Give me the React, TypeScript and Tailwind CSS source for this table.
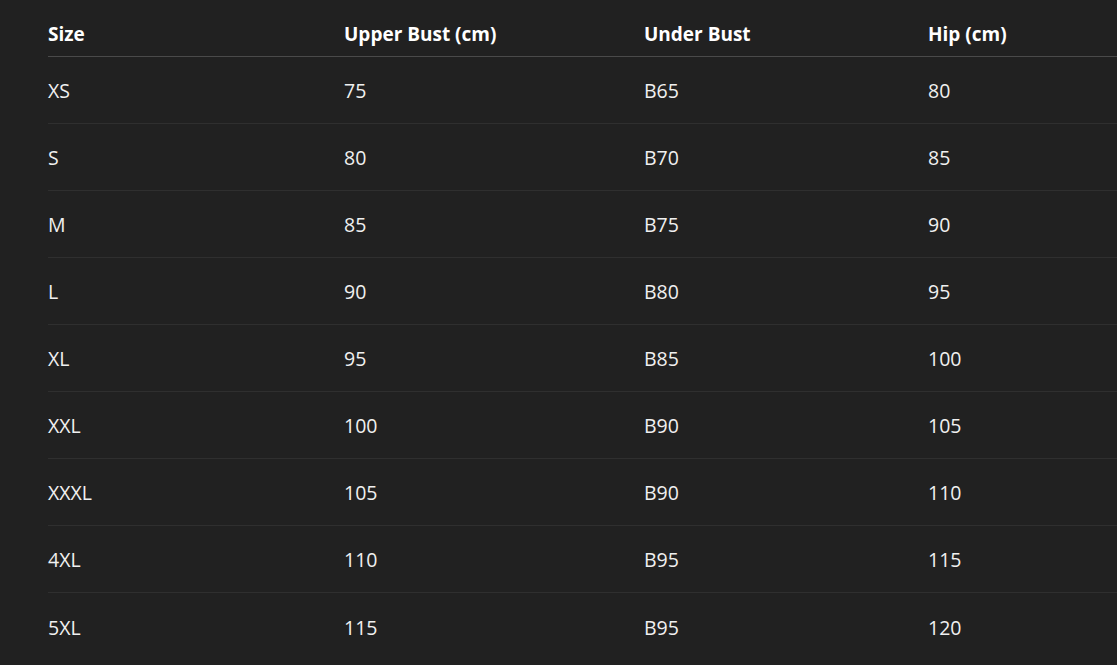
import React from 'react';

const rows = [
  ['XS', '75', 'B65', '80'],
  ['S', '80', 'B70', '85'],
  ['M', '85', 'B75', '90'],
  ['L', '90', 'B80', '95'],
  ['XL', '95', 'B85', '100'],
  ['XXL', '100', 'B90', '105'],
  ['XXXL', '105', 'B90', '110'],
  ['4XL', '110', 'B95', '115'],
  ['5XL', '115', 'B95', '120'],
];

const cols = 'grid grid-cols-[296px_300px_284px_240px]';

export default function App() {
  return (
    <div className="min-h-screen w-full overflow-hidden bg-[#212121] pl-[48px] font-['Open_Sans',sans-serif]">
      <div className="w-[1120px]">
        {/* Header */}
        <div className={`${cols} h-[57px] items-end border-b border-[#4a4a4a] pb-[8px] text-[19px] font-bold text-white`}>
          <div>Size</div>
          <div>Upper Bust (cm)</div>
          <div>Under Bust</div>
          <div>Hip (cm)</div>
        </div>

        {/* Body */}
        {rows.map((r, i) => (
          <div
            key={i}
            className={`${cols} h-[67px] items-center pt-[2px] text-[19.5px] text-[#f0f0f0] ${i < rows.length - 1 ? 'border-b border-[#2f2f2f]' : ''}`}
          >
            {r.map((c, j) => (
              <div key={j}>{c}</div>
            ))}
          </div>
        ))}
      </div>
    </div>
  );
}
